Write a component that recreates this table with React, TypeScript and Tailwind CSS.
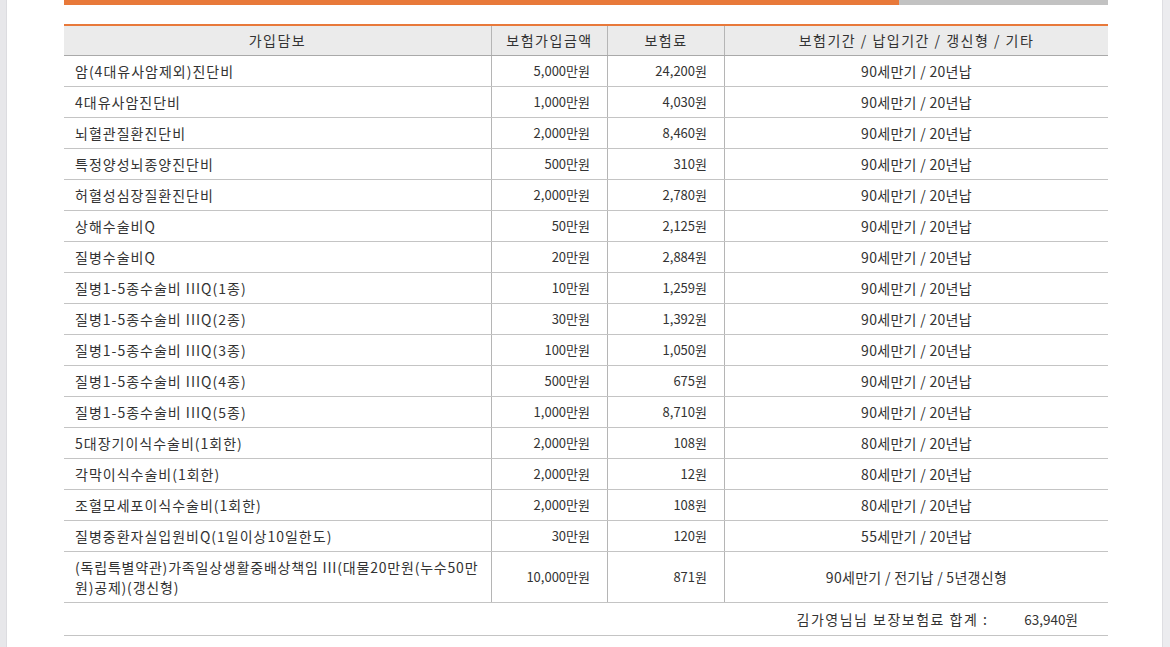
import React from "react";

type Row = { name: React.ReactNode; amount: string; premium: string; term: string; tall?: boolean };

const rows: Row[] = [
  { name: "암(4대유사암제외)진단비", amount: "5,000만원", premium: "24,200원", term: "90세만기 / 20년납" },
  { name: "4대유사암진단비", amount: "1,000만원", premium: "4,030원", term: "90세만기 / 20년납" },
  { name: "뇌혈관질환진단비", amount: "2,000만원", premium: "8,460원", term: "90세만기 / 20년납" },
  { name: "특정양성뇌종양진단비", amount: "500만원", premium: "310원", term: "90세만기 / 20년납" },
  { name: "허혈성심장질환진단비", amount: "2,000만원", premium: "2,780원", term: "90세만기 / 20년납" },
  { name: "상해수술비Q", amount: "50만원", premium: "2,125원", term: "90세만기 / 20년납" },
  { name: "질병수술비Q", amount: "20만원", premium: "2,884원", term: "90세만기 / 20년납" },
  { name: "질병1-5종수술비 IIIQ(1종)", amount: "10만원", premium: "1,259원", term: "90세만기 / 20년납" },
  { name: "질병1-5종수술비 IIIQ(2종)", amount: "30만원", premium: "1,392원", term: "90세만기 / 20년납" },
  { name: "질병1-5종수술비 IIIQ(3종)", amount: "100만원", premium: "1,050원", term: "90세만기 / 20년납" },
  { name: "질병1-5종수술비 IIIQ(4종)", amount: "500만원", premium: "675원", term: "90세만기 / 20년납" },
  { name: "질병1-5종수술비 IIIQ(5종)", amount: "1,000만원", premium: "8,710원", term: "90세만기 / 20년납" },
  { name: "5대장기이식수술비(1회한)", amount: "2,000만원", premium: "108원", term: "80세만기 / 20년납" },
  { name: "각막이식수술비(1회한)", amount: "2,000만원", premium: "12원", term: "80세만기 / 20년납" },
  { name: "조혈모세포이식수술비(1회한)", amount: "2,000만원", premium: "108원", term: "80세만기 / 20년납" },
  { name: "질병중환자실입원비Q(1일이상10일한도)", amount: "30만원", premium: "120원", term: "55세만기 / 20년납" },
  {
    name: (
      <>
        (독립특별약관)가족일상생활중배상책임 III(대물20만원(누수50만
        <br />
        원)공제)(갱신형)
      </>
    ),
    amount: "10,000만원",
    premium: "871원",
    term: "90세만기 / 전기납 / 5년갱신형",
    tall: true,
  },
];

export default function App() {
  return (
    <div
      className="flex w-[1170px] h-[647px] overflow-hidden bg-white text-[#333333]"
      style={{ fontFamily: '"Noto Sans CJK KR", "Noto Sans", sans-serif' }}
    >
      <div className="w-[7px] shrink-0 bg-[#e7e7ea] border-r border-[#dcdce0]" />
      <div className="flex-1 pl-[57px] pr-[54px]">
        <div className="flex h-[5px]">
          <div className="w-[835px] bg-[#e8793a]" />
          <div className="flex-1 bg-[#c2c2c2]" />
        </div>
        <div className="mt-[19px] border-t-2 border-[#e8793a]">
          <div className="grid grid-cols-[427px_116px_117px_1fr] h-[30px] bg-[#ebebeb] border-b border-[#a9a9a9] text-[14px] tracking-[1.5px]">
            <div className="flex items-center justify-center">가입담보</div>
            <div className="flex items-center justify-center border-l border-[#b5b5b5]">보험가입금액</div>
            <div className="flex items-center justify-center border-l border-[#b5b5b5]">보험료</div>
            <div className="flex items-center justify-center border-l border-[#b5b5b5]">보험기간 / 납입기간 / 갱신형 / 기타</div>
          </div>
          {rows.map((r, i) => (
            <div
              key={i}
              className={`grid grid-cols-[427px_116px_117px_1fr] border-b border-[#c4c4c4] ${
                r.tall ? "h-[51px]" : "h-[31px]"
              }`}
            >
              <div
                className={`flex items-center pl-[11px] pr-[2px] text-[14px] ${
                  r.tall ? "leading-[20px] tracking-[0.8px]" : "tracking-[1px]"
                }`}
              >
                <span>{r.name}</span>
              </div>
              <div className="flex items-center justify-end pr-[17px] border-l border-[#b5b5b5] text-[13px]">{r.amount}</div>
              <div className="flex items-center justify-end pr-[17px] border-l border-[#b5b5b5] text-[13px]">{r.premium}</div>
              <div className="flex items-center justify-center border-l border-[#b5b5b5] text-[14px] tracking-[0.3px]">
                {r.term}
              </div>
            </div>
          ))}
          <div className="flex items-center justify-end h-[33px] border-b border-[#c4c4c4] pr-[30px]">
            <span className="text-[14px] tracking-[1.5px]">김가영님님 보장보험료 합계 :</span>
            <span className="ml-[36px] text-[13.5px]">63,940원</span>
          </div>
        </div>
      </div>
      <div className="w-[8px] shrink-0 bg-[#ececef] border-l border-[#dedee2]" />
    </div>
  );
}
